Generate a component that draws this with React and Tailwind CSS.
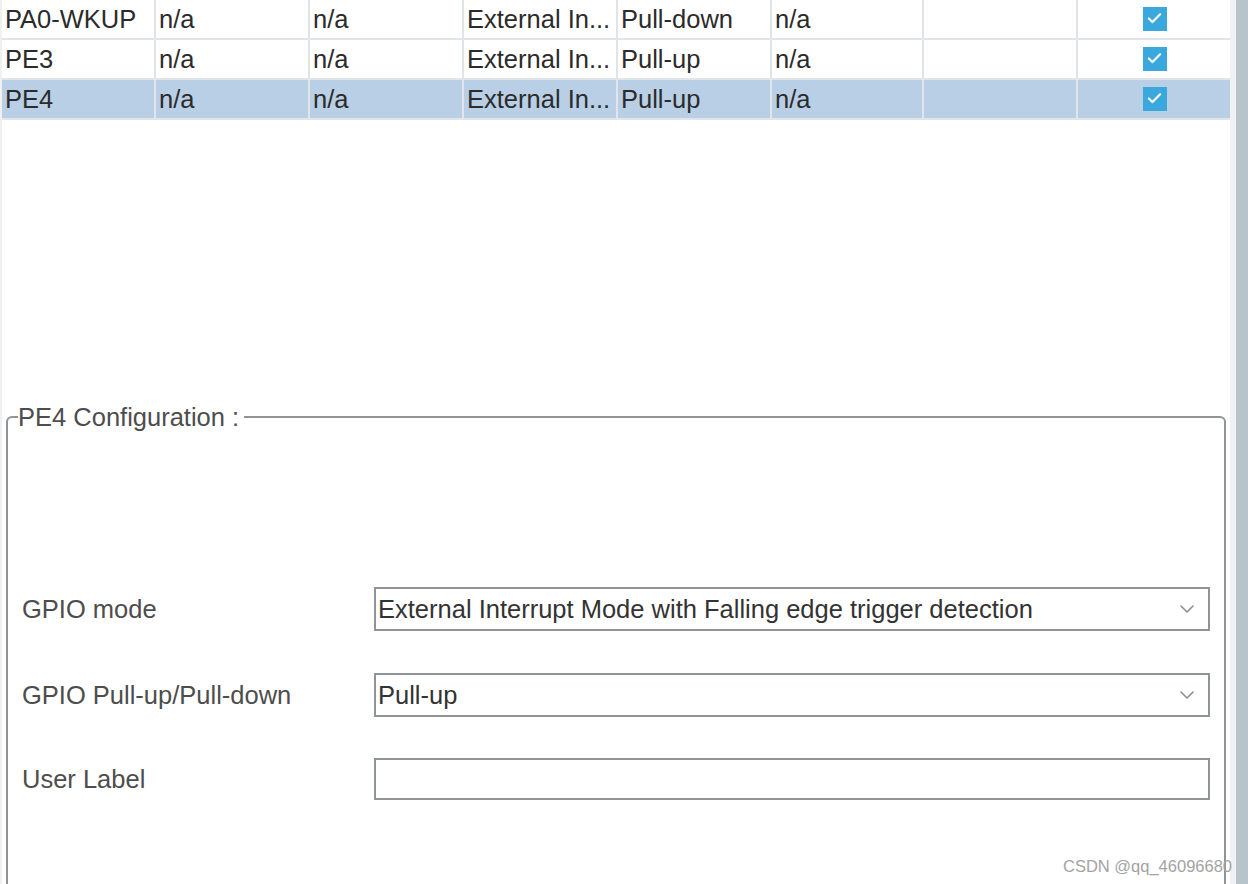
import { Check, ChevronDown } from 'lucide-react';

const pins = [
  { name: 'PA0-WKUP', mode: 'External In...', pull: 'Pull-down', selected: false },
  { name: 'PE3', mode: 'External In...', pull: 'Pull-up', selected: false },
  { name: 'PE4', mode: 'External In...', pull: 'Pull-up', selected: true },
];

const font = { fontFamily: '"Liberation Sans", Arial, sans-serif' };

function Cell({ children, last = false, className = '' }) {
  return (
    <div
      className={`flex h-[38px] items-center overflow-hidden whitespace-nowrap pl-[3px] pb-[1px] ${
        last ? '' : 'border-r-2 border-[#e1e5ea]'
      } ${className}`}
    >
      {children}
    </div>
  );
}

function PinRow({ pin }) {
  return (
    <div
      className={`grid grid-cols-[154px_154px_154px_154px_154px_152px_154px_152px] border-b-2 border-[#e1e5ea] ${
        pin.selected ? 'bg-[#b9cfe5]' : 'bg-white'
      }`}
    >
      <Cell>{pin.name}</Cell>
      <Cell>n/a</Cell>
      <Cell>n/a</Cell>
      <Cell>{pin.mode}</Cell>
      <Cell>{pin.pull}</Cell>
      <Cell>n/a</Cell>
      <Cell />
      <Cell last className="justify-center pl-0 pr-[2px]">
        <span className="flex h-6 w-6 items-center justify-center bg-[#3aa8dc]">
          <Check className="h-[17px] w-[17px] text-white" strokeWidth={3} />
        </span>
      </Cell>
    </div>
  );
}

function SelectBox({ value }) {
  return (
    <div className="flex h-[44px] w-[836px] items-center justify-between border-2 border-[#8f9499] bg-white pl-[2px] pr-[9px] text-[#333]">
      <span className="pb-[1px]">{value}</span>
      <ChevronDown className="h-6 w-6 text-[#8a8f94]" strokeWidth={1.6} />
    </div>
  );
}

function FormRow({ label, children, className = '' }) {
  return (
    <div className={`flex items-center ${className}`}>
      <span className="w-[352px] shrink-0 pb-[1px] text-[#4d4d4d]">{label}</span>
      {children}
    </div>
  );
}

export default function App() {
  return (
    <div
      className="relative grid h-[884px] w-[1248px] grid-cols-[2px_1228px_6px_12px] overflow-hidden bg-white text-[25.5px] leading-[28px] text-[#2b2b2b]"
      style={font}
    >
      <div className="bg-[#f0f0f0]" />

      <div className="flex min-w-0 flex-col">
        <div className="shrink-0">
          {pins.map((pin) => (
            <PinRow key={pin.name} pin={pin} />
          ))}
        </div>

        <fieldset className="mx-[4px] mt-[283px] h-[600px] min-w-0 shrink-0 rounded-[6px] border-2 border-[#8f9499] px-0">
          <legend className="ml-[10px] pr-[5px] leading-[28px] text-[#4d4d4d]">PE4 Configuration :</legend>
          <div className="flex flex-col pl-[14px] pt-[156px]">
            <FormRow label="GPIO mode">
              <SelectBox value="External Interrupt Mode with Falling edge trigger detection" />
            </FormRow>
            <FormRow label="GPIO Pull-up/Pull-down" className="mt-[42px]">
              <SelectBox value="Pull-up" />
            </FormRow>
            <FormRow label="User Label" className="mt-[41px]">
              <div className="h-[42px] w-[836px] border-2 border-[#8f9499] bg-white" />
            </FormRow>
          </div>
        </fieldset>
      </div>

      <div className="bg-[#f0f1f3]" />
      <div className="bg-[#b9c3ca]" />

      <span className="absolute left-[1063px] top-[856px] text-[16.5px] leading-[20px] text-[#a3a3a3]">
        CSDN @qq_46096680
      </span>
    </div>
  );
}
